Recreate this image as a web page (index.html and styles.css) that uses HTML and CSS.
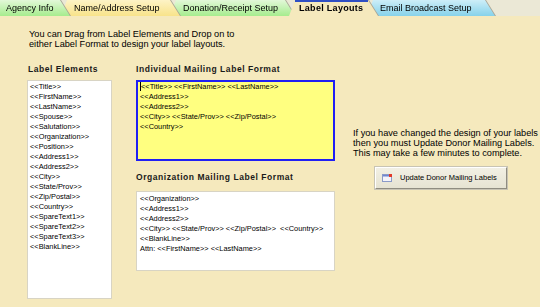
FILE: index.html
```html
<!DOCTYPE html>
<html lang="en">
<head>
    <meta charset="UTF-8">
    <title>Label Layouts</title>
    <link rel="stylesheet" href="styles.css">
</head>
<body>
    <!-- tab strip -->
    <div class="tabs">
        <div class="tab tab-green tab-first"><span>Agency Info</span></div>
        <div class="tab tab-yellow tab-name"><span>Name/Address Setup</span></div>
        <div class="tab tab-green tab-donation"><span>Donation/Receipt Setup</span></div>
        <div class="tab tab-active"><span>Label Layouts</span></div>
        <div class="tab tab-blue tab-email"><span>Email Broadcast Setup</span></div>
    </div>

    <div class="panel">
        <p class="intro">You can Drag from Label Elements and Drop on to<br>either Label Format to design your label layouts.</p>

        <div class="columns">
            <!-- available elements -->
            <div class="col-elements">
                <h3>Label Elements</h3>
                <ul class="element-list">
                    <li>&lt;&lt;Title&gt;&gt;</li>
                    <li>&lt;&lt;FirstName&gt;&gt;</li>
                    <li>&lt;&lt;LastName&gt;&gt;</li>
                    <li>&lt;&lt;Spouse&gt;&gt;</li>
                    <li>&lt;&lt;Salutation&gt;&gt;</li>
                    <li>&lt;&lt;Organization&gt;&gt;</li>
                    <li>&lt;&lt;Position&gt;&gt;</li>
                    <li>&lt;&lt;Address1&gt;&gt;</li>
                    <li>&lt;&lt;Address2&gt;&gt;</li>
                    <li>&lt;&lt;City&gt;&gt;</li>
                    <li>&lt;&lt;State/Prov&gt;&gt;</li>
                    <li>&lt;&lt;Zip/Postal&gt;&gt;</li>
                    <li>&lt;&lt;Country&gt;&gt;</li>
                    <li>&lt;&lt;SpareText1&gt;&gt;</li>
                    <li>&lt;&lt;SpareText2&gt;&gt;</li>
                    <li>&lt;&lt;SpareText3&gt;&gt;</li>
                    <li>&lt;&lt;BlankLine&gt;&gt;</li>
                </ul>
            </div>

            <!-- label formats -->
            <div class="col-formats">
                <h3>Individual Mailing Label Format</h3>
                <div class="label-box individual">
                    <div><span class="caret"></span>&lt;&lt;Title&gt;&gt; &lt;&lt;FirstName&gt;&gt; &lt;&lt;LastName&gt;&gt;</div>
                    <div>&lt;&lt;Address1&gt;&gt;</div>
                    <div>&lt;&lt;Address2&gt;&gt;</div>
                    <div>&lt;&lt;City&gt;&gt; &lt;&lt;State/Prov&gt;&gt; &lt;&lt;Zip/Postal&gt;&gt;</div>
                    <div>&lt;&lt;Country&gt;&gt;</div>
                </div>

                <h3 class="org-title">Organization Mailing Label Format</h3>
                <div class="label-box organization">
                    <div>&lt;&lt;Organization&gt;&gt;</div>
                    <div>&lt;&lt;Address1&gt;&gt;</div>
                    <div>&lt;&lt;Address2&gt;&gt;</div>
                    <div>&lt;&lt;City&gt;&gt; &lt;&lt;State/Prov&gt;&gt; &lt;&lt;Zip/Postal&gt;&gt;&nbsp; &lt;&lt;Country&gt;&gt;</div>
                    <div>&lt;&lt;BlankLine&gt;&gt;</div>
                    <div>Attn: &lt;&lt;FirstName&gt;&gt; &lt;&lt;LastName&gt;&gt;</div>
                </div>
            </div>

            <!-- update -->
            <div class="col-update">
                <p>If you have changed the design of your labels<br>then you must Update Donor Mailing Labels.<br>This may take a few minutes to complete.</p>
                <button type="button" class="update-btn">
                    <svg width="10" height="8" viewBox="0 0 10 8">
                        <rect x="0.5" y="0.5" width="9" height="7" fill="#f4f4fa" stroke="#8a9ac8"/>
                        <rect x="1" y="1" width="8" height="1.5" fill="#6f86d0"/>
                        <rect x="7" y="0" width="3" height="3" fill="#e23a2a"/>
                    </svg>
                    Update Donor Mailing Labels
                </button>
            </div>
        </div>
    </div>
</body>
</html>
```

FILE: styles.css
```css
* {
    box-sizing: border-box;
    margin: 0;
    padding: 0;
}

body {
    font-family: "Liberation Sans", Arial, sans-serif;
    background-color: #f5e9bd;
    color: #000;
    width: 540px;
    height: 307px;
    overflow: hidden;
}

/* tab strip */
.tabs {
    display: flex;
    height: 16px;
    background-color: #ebe8d6;
}

.tab {
    position: relative;
    filter: drop-shadow(1px 0 0 #a9a595);
}

.tab span {
    display: block;
    height: 16px;
    line-height: 16px;
    font-size: 9px;
    padding-left: 13px;
    white-space: nowrap;
    clip-path: polygon(6px 0, calc(100% - 10px) 0, 100% 100%, 0 100%);
}

.tab-green span {
    background: linear-gradient(#e2f8d8, #a6ec8e);
}

.tab-yellow span {
    background: linear-gradient(#fdf3c6, #f8e38a);
}

.tab-blue span {
    background: linear-gradient(#cdeef8, #86d2ea);
}

.tab-first {
    width: 70px;
    z-index: 5;
}

.tab-first span {
    padding-left: 6px;
    clip-path: polygon(0 0, calc(100% - 10px) 0, 100% 100%, 0 100%);
}

.tab-name {
    width: 119px;
    margin-left: -9px;
    z-index: 4;
}

.tab-donation {
    width: 125px;
    margin-left: -10px;
    z-index: 3;
}

.tab-active {
    width: 89px;
    margin-left: -6px;
    z-index: 6;
}

.tab-active span {
    background-color: #f5e9bd;
    font-weight: bold;
    letter-spacing: 0.3px;
    padding-left: 10px;
}

.tab-active span::before {
    content: "";
    position: absolute;
    top: 0;
    left: 6px;
    right: 10px;
    height: 2px;
    background-color: #2f4fc4;
}

.tab-email {
    width: 128px;
    margin-left: -11px;
    z-index: 1;
}

/* panel */
.intro {
    font-size: 9.2px;
    line-height: 10px;
    margin: 13px 0 0 29px;
}

.columns {
    display: flex;
    margin-top: 15px;
}

h3 {
    font-size: 8.5px;
    line-height: 10px;
    letter-spacing: 0.55px;
    color: #1a1a1a;
    margin-bottom: 5.5px;
}

.col-elements {
    width: 85px;
    margin-left: 27px;
}

.col-elements h3 {
    margin-left: 1px;
}

.element-list {
    list-style: none;
    background-color: #fff;
    border: 1px solid #d8d4c4;
    height: 219px;
    padding: 1px 0 0 2px;
}

.element-list li,
.label-box div {
    font-size: 7.4px;
    line-height: 10px;
    white-space: nowrap;
}

.col-formats {
    width: 199px;
    margin-left: 24px;
}

.label-box {
    background-color: #fff;
    border: 1px solid #d8d4c4;
    padding: 2px 0 0 3px;
}

.individual {
    height: 81px;
    background-color: #ffff80;
    border: 2px solid #1f1ff4;
    padding: 0 0 0 2px;
}

.caret {
    display: inline-block;
    width: 1px;
    height: 9px;
    background-color: #000;
    vertical-align: -2px;
}

.org-title {
    margin: 11px 0 9px;
}

.organization {
    height: 80px;
}

.col-update {
    margin-left: 18px;
    padding-top: 63.5px;
}

.col-update p {
    font-size: 9.2px;
    line-height: 10px;
    white-space: nowrap;
}

.update-btn {
    display: flex;
    align-items: center;
    gap: 8px;
    width: 132px;
    height: 22px;
    margin: 9px 0 0 22px;
    padding-left: 6px;
    font-family: "Liberation Sans", Arial, sans-serif;
    font-size: 7.5px;
    color: #000;
    background: linear-gradient(#f2f0e4, #e6e3d2);
    border: 1px solid;
    border-color: #fff #8f8c80 #8f8c80 #fff;
    box-shadow: 0 0 0 1px #c8c4b4;
    cursor: pointer;
}
```
